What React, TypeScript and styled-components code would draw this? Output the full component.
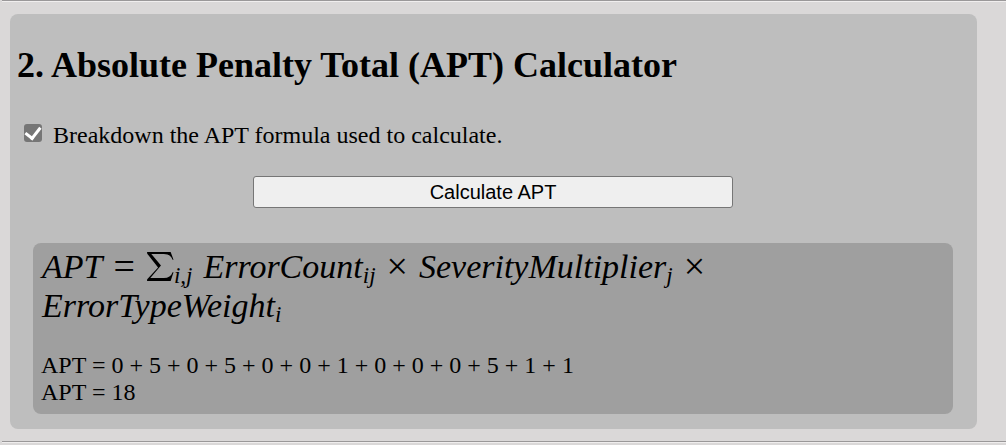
import React, { useState } from "react";
import styled, { createGlobalStyle } from "styled-components";

const GlobalStyle = createGlobalStyle`
  * { box-sizing: border-box; }
  body {
    margin: 0;
    background: #dad8d8;
    color: #000;
    font-family: "Liberation Serif", "Times New Roman", serif;
    font-size: 24px;
    line-height: 27px;
  }
`;

const Page = styled.main`
  padding-left: 2px;
`;

const Divider = styled.hr`
  margin: 0;
  border: 0;
  border-top: 1px solid #9a9899;
  border-bottom: 1px solid #f0eeee;
`;

const Card = styled.section`
  margin: 12px 29px 12px 8px;
  padding: 31px 8px 15px 7px;
  border-radius: 8px;
  background: #bebebe;
`;

const Title = styled.h2`
  margin: 0;
  font-size: 36px;
  line-height: 40px;
`;

const CheckRow = styled.label`
  display: flex;
  align-items: center;
  gap: 11px;
  margin-top: 37px;
  padding-left: 7px;
`;

const Checkbox = styled.input`
  appearance: none;
  display: grid;
  place-items: center;
  width: 18px;
  height: 18px;
  margin: 0 0 6px;
  border-radius: 3px;
  background: #767676;

  &::after {
    content: "";
    width: 7px;
    height: 12px;
    margin-bottom: 2px;
    border: solid #fff;
    border-width: 0 3px 3px 0;
    transform: rotate(38deg);
    visibility: hidden;
  }

  &:checked::after { visibility: visible; }
`;

const CalculateButton = styled.button`
  display: block;
  width: calc(50% + 4px);
  height: 32px;
  margin: 27px auto 35px;
  padding: 0;
  border: 1px solid #767676;
  border-radius: 3px;
  background: #efefef;
  color: #000;
  font-family: "Liberation Sans", Arial, sans-serif;
  font-size: 20px;
`;

const Result = styled.div`
  margin: 0 16px;
  padding: 4px 8px 8px;
  border-radius: 8px;
  background: #9f9f9f;
`;

const Formula = styled.div`
  margin-bottom: 27px;
  padding-left: 1px;
  font-size: 34px;
  line-height: 39px;
`;

const FormulaRow = styled.div`
  display: flex;
  flex-wrap: wrap;
  column-gap: 11px;
`;

const Term = styled.span`
  font-style: italic;
`;

const Operator = styled.span`
  font-size: 38px;
`;

const Sum = styled.span`
  display: flex;
  align-items: center;
  font-style: italic;
`;

const Sub = styled.sub`
  font-size: 23px;
  line-height: 0;
  vertical-align: -5px;
`;

const Sigma = styled.svg`
  width: 28px;
  height: 29px;
`;

const Line = styled.p`
  margin: 0;
`;

const scores = [0, 5, 0, 5, 0, 0, 1, 0, 0, 0, 5, 1, 1];

export default function App() {
  const [breakdown, setBreakdown] = useState(true);
  return (
    <>
      <GlobalStyle />
      <Page>
        <Divider />
        <Card>
          <Title>2. Absolute Penalty Total (APT) Calculator</Title>
          <CheckRow>
            <Checkbox
              type="checkbox"
              checked={breakdown}
              onChange={(e) => setBreakdown(e.target.checked)}
            />
            Breakdown the APT formula used to calculate.
          </CheckRow>
          <CalculateButton type="button">Calculate APT</CalculateButton>
          <Result>
            {breakdown && (
              <Formula>
                <FormulaRow>
                  <Term>APT</Term>
                  <Operator>=</Operator>
                  <Sum>
                    <Sigma viewBox="0 0 28 30" role="img" aria-label="sum">
                      <path d="M1 0H25L28 8H27Q25 2 18 2H5L15 14L4 27H18Q25 27 27 21H28L25 30H1Q0 30 1 28L12 16L1 2Q0 0 1 0Z" />
                    </Sigma>
                    <span>
                      <Sub>i,j</Sub>
                    </span>
                  </Sum>
                  <Term>
                    ErrorCount<Sub>ij</Sub>
                  </Term>
                  <Operator>×</Operator>
                  <Term>
                    SeverityMultiplier<Sub>j</Sub>
                  </Term>
                  <Operator>×</Operator>
                </FormulaRow>
                <FormulaRow>
                  <Term>
                    ErrorTypeWeight<Sub>i</Sub>
                  </Term>
                </FormulaRow>
              </Formula>
            )}
            <Line>APT = {scores.join(" + ")}</Line>
            <Line>APT = {scores.reduce((a, b) => a + b, 0)}</Line>
          </Result>
        </Card>
        <Divider />
      </Page>
    </>
  );
}
